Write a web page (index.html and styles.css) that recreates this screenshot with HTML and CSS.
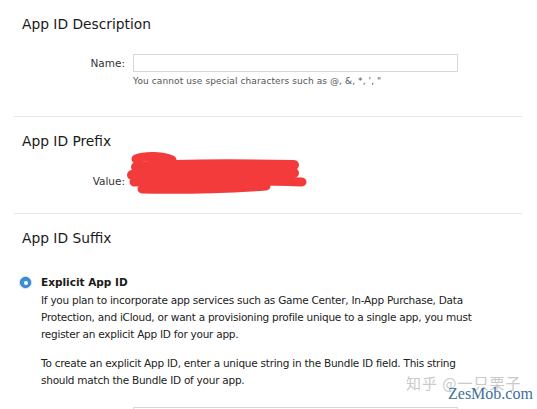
FILE: index.html
```html
<!DOCTYPE html>
<html>
<head>
<meta charset="utf-8">
<link rel="stylesheet" href="styles.css">
</head>
<body>
<div class="page">
  <section class="sec sec-desc">
    <h2 class="title">App ID Description</h2>
    <div class="row">
      <label class="label">Name:</label>
      <div class="field">
        <div class="input"></div>
        <div class="hint">You cannot use special characters such as @, &amp;, *, ', "</div>
      </div>
    </div>
  </section>
  <section class="sec sec-prefix">
    <h2 class="title">App ID Prefix</h2>
    <div class="row row-value">
      <label class="label">Value:</label>
      <div class="field value">
        <svg class="scribble" width="190" height="48" viewBox="0 0 190 48">
          <g stroke="#f43b3b" stroke-linecap="round" fill="none">
            <path d="M10 8 C20 4 38 5 46 9" stroke-width="9"/>
            <path d="M10 16 C60 12 120 13 168 14" stroke-width="10"/>
            <path d="M6 24 C60 21 130 22 168 22" stroke-width="10"/>
            <path d="M8 31 C70 30 140 29 176 31" stroke-width="9"/>
            <path d="M16 38 C60 39 110 37 140 35" stroke-width="9"/>
          </g>
        </svg>
      </div>
    </div>
  </section>
  <section class="sec sec-suffix">
    <h2 class="title">App ID Suffix</h2>
    <div class="option">
      <span class="radio"><span class="dot"></span></span>
      <div class="opt-body">
        <div class="opt-title">Explicit App ID</div>
        <p class="para">If you plan to incorporate app services such as Game Center, In-App Purchase, Data Protection, and iCloud, or want a provisioning profile unique to a single app, you must register an explicit App ID for your app.</p>
        <p class="para last">To create an explicit App ID, enter a unique string in the Bundle ID field. This string should match the Bundle ID of your app.</p>
      </div>
    </div>
    <div class="row row-next">
      <div class="label"></div>
      <div class="field"><div class="input"></div></div>
    </div>
  </section>
  <div class="watermark">
    <div class="wm-cn">知乎 @一只栗子</div>
    <div class="wm-en">ZesMob.com</div>
  </div>
</div>
</body>
</html>
```
FILE: styles.css
```css
html, body {
  margin: 0;
  padding: 0;
  background: #ffffff;
}
body {
  width: 537px;
  height: 409px;
  overflow: hidden;
  font-family: "DejaVu Sans", "Liberation Sans", sans-serif;
  color: #222;
}
.page {
  position: relative;
  width: 537px;
  height: 409px;
}
.sec {
  margin: 0 15px 0 14px;
  border-bottom: 1px solid #e6e6e6;
}
.sec-suffix {
  border-bottom: none;
}
.title {
  margin: 0;
  padding: 15px 0 0 8px;
  font-size: 13.8px;
  font-weight: normal;
  color: #1a1a1a;
  line-height: 18px;
}
.sec-desc { height: 116px; }
.sec-prefix { height: 96px; }
.row {
  display: flex;
  margin-top: 21px;
}
.label {
  width: 111px;
  text-align: right;
  font-size: 10.5px;
  color: #333;
  padding-right: 8px;
  line-height: 18px;
}
.field {
  display: flex;
  flex-direction: column;
}
.input {
  width: 323px;
  height: 16px;
  border: 1px solid #d8d8d8;
  background: #fff;
}
.hint {
  font-size: 9px;
  color: #555;
  margin-top: 4px;
  letter-spacing: 0.1px;
}
.row-value {
  margin-top: 22px;
}
.value {
  position: relative;
}
.scribble {
  position: absolute;
  left: -7px;
  top: -21px;
}
.option {
  display: flex;
  margin-top: 28px;
  padding-left: 6px;
}
.radio {
  width: 11px;
  height: 11px;
  border-radius: 50%;
  background: #3b8fd9;
  border: 1px solid #2f76b8;
  box-sizing: border-box;
  display: flex;
  align-items: center;
  justify-content: center;
  margin-top: 2px;
  margin-right: 10px;
  flex: none;
  box-shadow: 0 0 1px 1px rgba(120, 170, 230, 0.45);
}
.dot {
  width: 4px;
  height: 4px;
  border-radius: 50%;
  background: #fff;
}
.opt-body {
  width: 445px;
}
.opt-title {
  font-size: 10.5px;
  font-weight: bold;
  color: #1a1a1a;
  line-height: 15px;
}
.para {
  margin: 2px 0 12px;
  font-size: 10.5px;
  line-height: 17px;
  letter-spacing: -0.25px;
  color: #222;
}
.para.last {
  margin-bottom: 0;
}
.row-next {
  margin-top: 18px;
}
.watermark {
  position: absolute;
  left: 406px;
  top: 374px;
  width: 131px;
}
.wm-cn {
  font-family: "Noto Sans CJK SC", sans-serif;
  font-size: 15px;
  color: #cacaca;
  line-height: 18px;
  letter-spacing: 1px;
}
.wm-en {
  font-family: "Liberation Serif", serif;
  font-size: 16px;
  color: #3d6f9a;
  line-height: 14px;
  margin-left: 42px;
  margin-top: -5px;
}
```
